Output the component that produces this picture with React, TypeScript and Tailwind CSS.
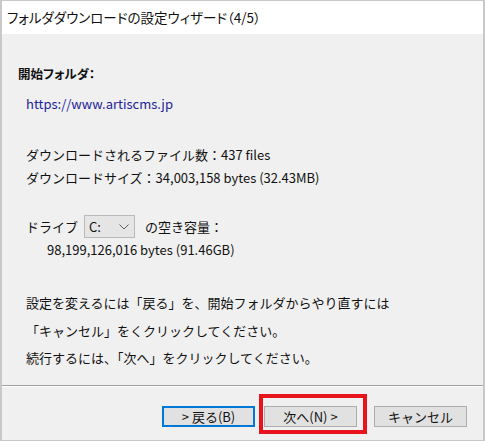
const FONT = "font-['Noto_Sans_CJK_JP','Noto_Sans',sans-serif]";
const PALT = "[font-feature-settings:'palt']";

function Btn({ label, focused }: { label: string; focused?: boolean }) {
  return (
    <button
      className={[
        'w-[93px] h-[21px] flex items-center justify-center bg-[#e1e1e1] text-[13px] text-[#111] leading-none',
        focused ? 'border-2 border-[#0078d7]' : 'border border-[#adadad]',
      ].join(' ')}
    >
      {label}
    </button>
  );
}

export default function App() {
  return (
    <div className={`${FONT} w-[485px] h-[441px] flex flex-col border border-l-2 border-r-2 border-[#c8c8c8] bg-[#f0f0f0] text-[#111] relative`}>
      {/* title */}
      <div className={`${PALT} h-[33px] bg-white flex items-center pl-[5px] text-[13.5px] text-[#111] shrink-0`}>
        フォルダダウンロードの設定ウィザード（4/5）
      </div>

      {/* body */}
      <div className="flex-1 flex flex-col pl-[16px] text-[13px]">
        <p className={`${PALT} mt-[30px] leading-[20px] text-[12.5px] font-bold`}>開始フォルダ：</p>
        <p className="mt-[10px] ml-[8px] leading-[20px] text-[#23239b]">https://www.artiscms.jp</p>

        <div className="mt-[29px] ml-[8px] leading-[23px]">
          <p>ダウンロードされるファイル数：437 files</p>
          <p>ダウンロードサイズ：34,003,158 bytes (32.43MB)</p>
        </div>

        <div className="mt-[26px] ml-[8px] h-[23px] flex items-center">
          <span>ドライブ</span>
          <div className="ml-[6px] w-[51px] h-[23px] border border-[#b9b9b9] bg-[#e5e5e5] flex items-center justify-between pl-[4px] pr-[5px]">
            <span>C:</span>
            <svg width="10" height="6" viewBox="0 0 10 6" fill="none" stroke="#606060" strokeWidth="1">
              <path d="M0.5 0.5 L5 5 L9.5 0.5" />
            </svg>
          </div>
          <span className="ml-[10px]">の空き容量：</span>
        </div>
        <p className="mt-[2px] ml-[29px] leading-[20px]">98,199,126,016 bytes (91.46GB)</p>

        <div className="mt-[29px] ml-[8px] leading-[27.5px]">
          <p>設定を変えるには「戻る」を、開始フォルダからやり直すには</p>
          <p>「キャンセル」をくクリックしてください。</p>
          <p>続行するには、「次へ」をクリックしてください。</p>
        </div>
      </div>

      {/* separator */}
      <div className="h-px bg-[#a0a0a0] shrink-0" />
      <div className="h-px bg-white shrink-0" />

      {/* footer */}
      <div className="h-[53px] shrink-0 flex items-start justify-end pt-[19px] pr-[16px]">
        <Btn label="> 戻る(B)" focused />
        <div className="ml-[9px]">
          <Btn label="次へ(N) >" />
        </div>
        <div className="ml-[17px]">
          <Btn label="キャンセル" />
        </div>
      </div>

      {/* annotation */}
      <div className="absolute left-[257px] top-[393px] w-[108px] h-[40px] border-[4px] border-[#e8141c] pointer-events-none" />
    </div>
  );
}
